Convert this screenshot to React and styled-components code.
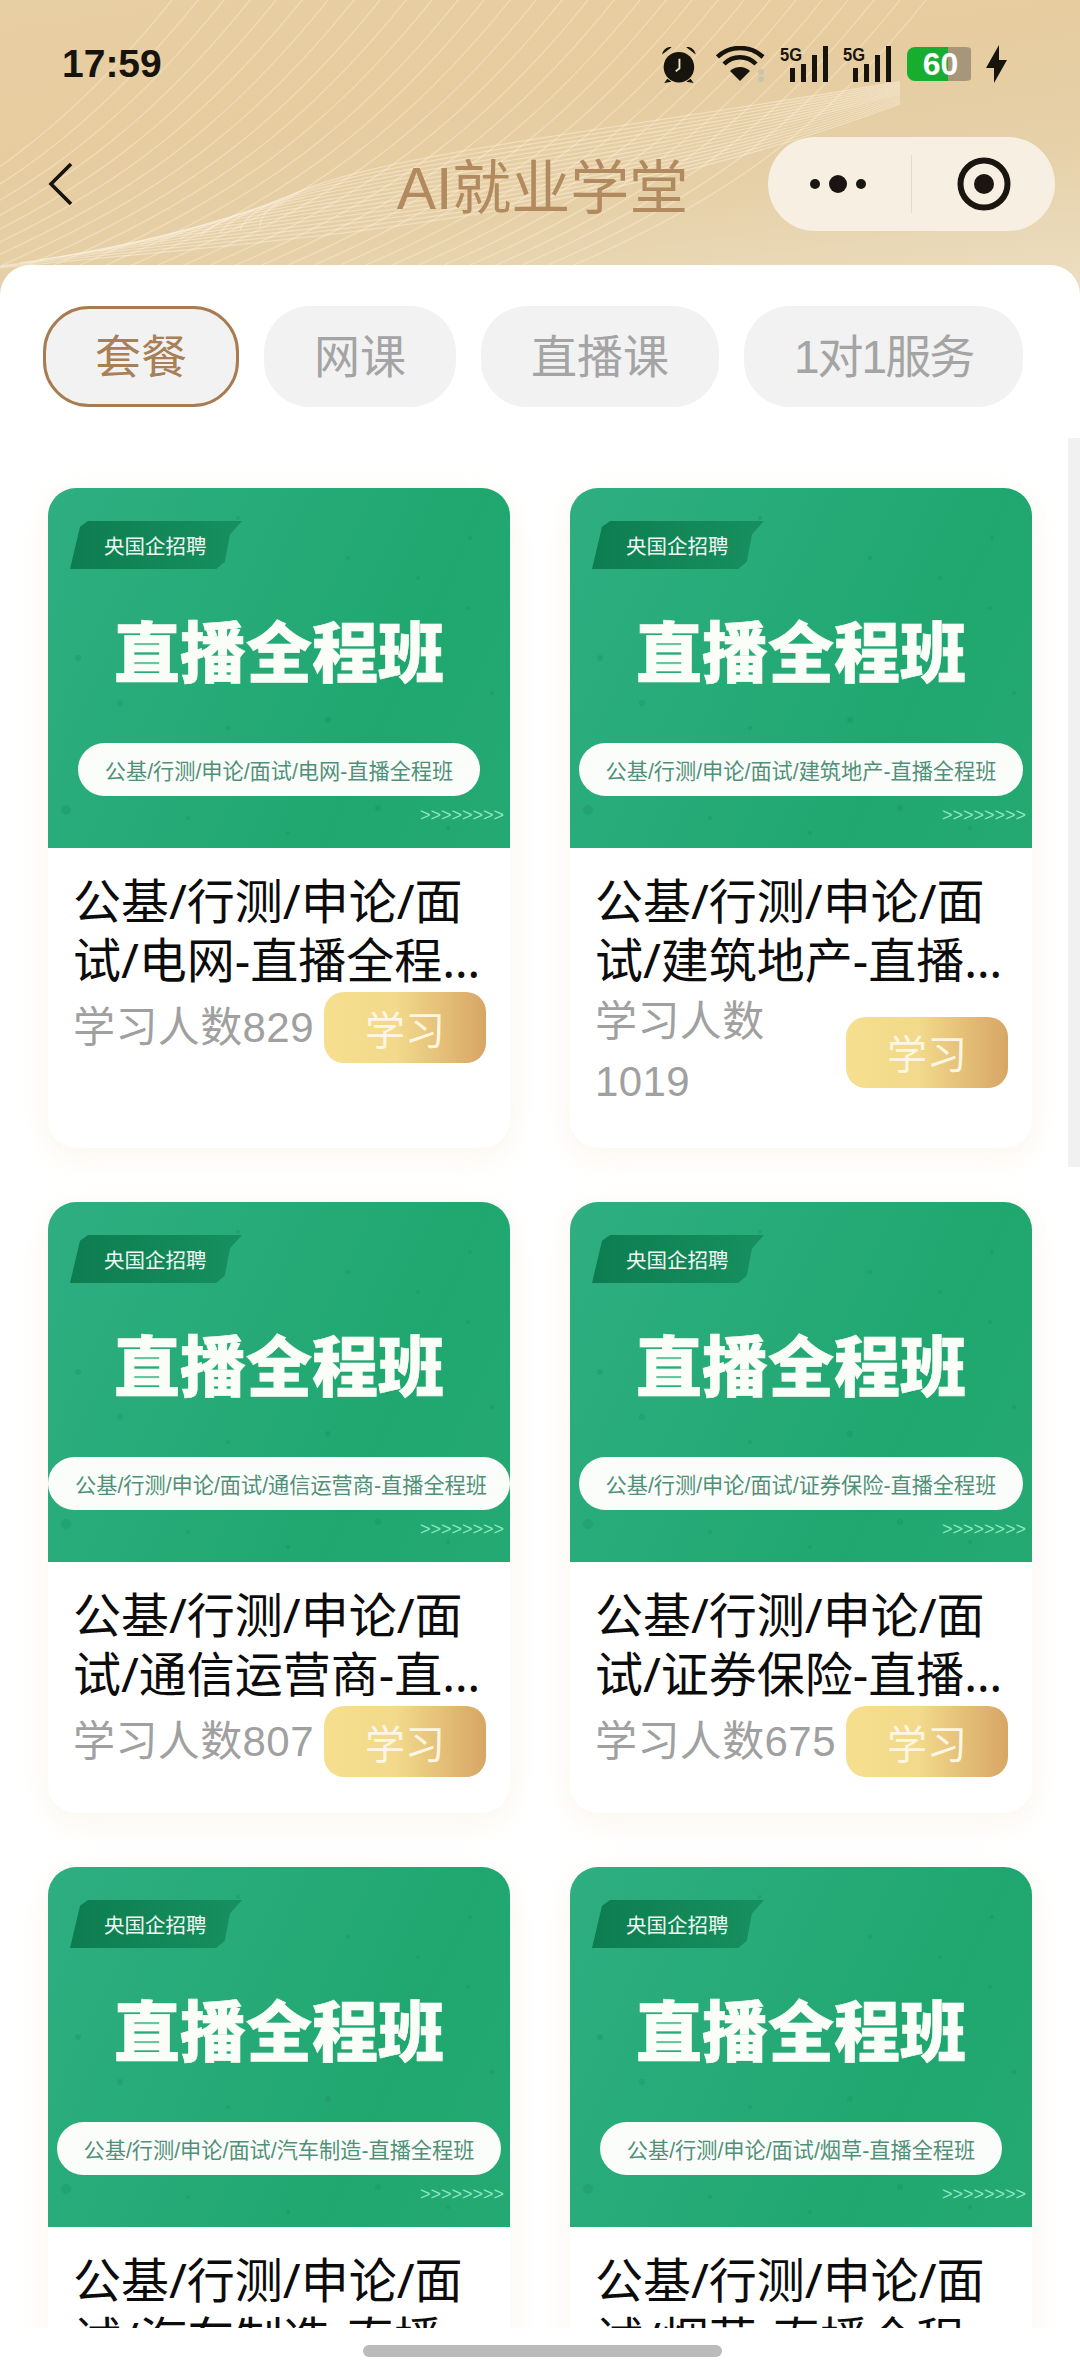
import React from "react";
import styled, { createGlobalStyle } from "styled-components";

const courses = [
  { major: "电网", students: 829 },
  { major: "建筑地产", students: 1019 },
  { major: "通信运营商", students: 807 },
  { major: "证券保险", students: 675 },
  { major: "汽车制造", students: 0 },
  { major: "烟草", students: 0 },
];

const tabs = ["套餐", "网课", "直播课", "1对1服务"];

// fixed spots so the paper texture on the banners is the same every run
const specks = [
  [64, 60, 3], [190, 30, 2], [300, 70, 2], [422, 50, 2], [30, 170, 3], [72, 215, 3],
  [180, 240, 2], [280, 232, 3], [340, 190, 2], [420, 120, 2], [444, 205, 2], [18, 322, 5],
  [140, 330, 2], [240, 345, 2], [330, 320, 3], [400, 340, 2], [110, 285, 2], [370, 90, 2],
];

const GlobalStyle = createGlobalStyle`
  html, body {
    margin: 0;
    padding: 0;
    background: #fff;
  }
  * {
    box-sizing: border-box;
  }
`;

const Page = styled.div`
  position: relative;
  width: 1080px;
  height: 2376px;
  overflow: hidden;
  display: flex;
  flex-direction: column;
  font-family: "Liberation Sans", "Noto Sans CJK SC", sans-serif;
  background: #fff;
`;

const Header = styled.header`
  position: relative;
  height: 295px;
  margin-bottom: -30px;
  flex-shrink: 0;
  background: linear-gradient(172deg, #e8cfa3 0%, #e6cc9f 35%, #e6d0a8 65%, #ecdfc3 100%);
`;

const Waves = styled.svg`
  position: absolute;
  inset: 0;
`;

const StatusBar = styled.div`
  position: relative;
  height: 128px;
  padding: 0 73px 0 62px;
  display: flex;
  align-items: center;
  justify-content: space-between;
`;

const Clock = styled.div`
  font-size: 39px;
  font-weight: 700;
  color: #17130d;
`;

const StatusIcons = styled.div`
  display: flex;
  align-items: center;
  gap: 15px;
`;

const Battery = styled.div`
  position: relative;
  width: 67px;
  height: 34px;
  margin-left: 1px;
  margin-right: -3px;
  display: flex;
  align-items: center;
  justify-content: center;
  font-size: 32px;
  font-weight: 700;
  color: #fff;
  border-radius: 8px;
  background: linear-gradient(90deg, #17ad2f 0 61%, #a8967c 61% 96%, transparent 96%);
`;

const NavBar = styled.div`
  position: relative;
  height: 112px;
  display: grid;
  grid-template-columns: 1fr auto 1fr;
  align-items: center;
  padding: 0 25px 0 48px;
`;

const Title = styled.h1`
  margin: 0;
  font-size: 59px;
  font-weight: 400;
  color: #b28a5f;
  transform: translate(-9px, -1px);
`;

const Capsule = styled.div`
  justify-self: end;
  width: 287px;
  height: 94px;
  display: flex;
  align-items: center;
  border-radius: 47px;
  background: #f6efe2;
`;

const CapsulePart = styled.div`
  flex: 1;
  height: 58px;
  display: flex;
  align-items: center;
  justify-content: center;
  & + & {
    border-left: 1px solid #e3dccd;
  }
`;

const Panel = styled.main`
  position: relative;
  flex: 1;
  min-height: 0;
  display: flex;
  flex-direction: column;
  border-radius: 30px 30px 0 0;
  background: #fff;
`;

const TabRow = styled.nav`
  display: flex;
  gap: 25px;
  padding: 41px 0 0 43px;
  margin-bottom: 41px;
`;

const Tab = styled.div`
  height: 101px;
  padding: 0 ${(p) => (p.$active ? "49px" : "50px")};
  display: flex;
  align-items: center;
  font-size: 46px;
  line-height: 1;
  letter-spacing: ${(p) => (p.$tight ? "-2px" : "0")};
  border-radius: 46px;
  background: #f2f2f2;
  color: ${(p) => (p.$active ? "#a97f56" : "#a4a4a4")};
  border: ${(p) => (p.$active ? "3px solid #a97b50" : "none")};
`;

const CourseArea = styled.div`
  height: 1880px;
  overflow: hidden;
`;

const Grid = styled.div`
  display: grid;
  grid-template-columns: 462px 462px;
  column-gap: 60px;
  row-gap: 54px;
  padding: 40px 48px 0;
`;

const Card = styled.article`
  border-radius: 28px;
  background: #fff;
  box-shadow: 0 8px 30px rgba(238, 205, 160, 0.2);
`;

const Banner = styled.div`
  position: relative;
  height: 360px;
  overflow: hidden;
  display: flex;
  flex-direction: column;
  border-radius: 28px 28px 0 0;
  background: linear-gradient(115deg, #2eae82 0%, #25aa76 45%, #20a76f 70%, #24a972 100%);
`;

const Specks = styled.svg`
  position: absolute;
  inset: 0;
`;

const Badge = styled.div`
  position: relative;
  width: 172px;
  height: 48px;
  margin: 33px 0 0 22px;
  padding-left: 34px;
  display: flex;
  align-items: center;
  font-size: 20.5px;
  color: #eef8f2;
  white-space: nowrap;
  background: linear-gradient(90deg, #0d7d50, #17905f);
  clip-path: polygon(0 100%, 10px 12%, 18px 0, 100% 0, 93% 28%, 90% 85%, 85% 100%);
`;

const BannerTitle = styled.div`
  position: relative;
  margin-top: 41px;
  height: 88px;
  text-align: center;
  font-size: 66px;
  line-height: 88px;
  font-weight: 900;
  color: #fbfdf9;
  white-space: nowrap;
  -webkit-text-stroke: 0.6px #fbfdf9;
`;

const BannerPill = styled.div`
  position: relative;
  align-self: center;
  max-width: 100%;
  height: 53px;
  margin-top: 45px;
  padding: 0 27px;
  display: flex;
  align-items: center;
  font-size: 21.2px;
  color: #4f9078;
  white-space: nowrap;
  border-radius: 27px;
  background: #fbfdfb;
`;

const Arrows = styled.div`
  position: relative;
  align-self: flex-end;
  margin: 9px 6px 0 0;
  font-size: 18px;
  line-height: 20px;
  color: #8be8c2;
  white-space: nowrap;
`;

const CardBody = styled.div`
  padding: 23px 24px 36px 25px;
`;

const CardTitle = styled.h2`
  margin: 0;
  height: 121px;
  font-family: "Noto Sans", "Noto Sans CJK SC", sans-serif;
  font-size: 48px;
  line-height: 59px;
  font-weight: 400;
  color: #0c0c0c;
  display: -webkit-box;
  -webkit-box-orient: vertical;
  -webkit-line-clamp: 2;
  overflow: hidden;
`;

const MetaRow = styled.div`
  display: flex;
  align-items: center;
  justify-content: space-between;
`;

const Students = styled.div`
  flex: 1;
  min-width: 0;
  font-size: 42px;
  line-height: 60px;
  letter-spacing: 0.4px;
  color: #a0a0a0;
`;

const StudyButton = styled.button`
  flex-shrink: 0;
  width: 162px;
  height: 71px;
  padding: 0;
  border: none;
  border-radius: 20px;
  font-family: inherit;
  font-size: 40px;
  color: #fdf6e2;
  background: linear-gradient(90deg, #f6df8e 0%, #f2d98b 45%, #d7a665 100%);
`;

const Scrollbar = styled.div`
  position: absolute;
  top: 173px;
  right: 0;
  width: 12px;
  height: 729px;
  background: #f1f1f1;
`;

const HomeBar = styled.div`
  position: absolute;
  left: 363px;
  bottom: 19px;
  width: 359px;
  height: 12px;
  border-radius: 6px;
  background: #bbbbbb;
`;

const WaveLines = () => {
  const sweep = [];
  for (let i = 0; i < 30; i++) {
    // steep lines in the upper left that lean over as they rise
    const x = -120 + i * 26;
    sweep.push(
      <path
        key={`s${i}`}
        d={`M${x - 60} 265 C ${x + 90} 200, ${x + 190} 130, ${x + 300} -10`}
        fill="none"
        stroke="#fff4de"
        strokeOpacity="0.38"
        strokeWidth="1.3"
      />
    );
  }
  const fan = [];
  for (let i = 0; i < 16; i++) {
    // the bundle that narrows toward the right of the title
    fan.push(
      <path
        key={`f${i}`}
        d={`M${i * 20 - 40} ${272 - i * 3} C 260 ${240 - i * 5}, 560 ${230 - i * 6}, 900 ${104 - i * 1.5}`}
        fill="none"
        stroke="#fff8ea"
        strokeOpacity="0.42"
        strokeWidth="1.3"
      />
    );
  }
  return (
    <Waves width="1080" height="295" viewBox="0 0 1080 295">
      {sweep}
      {fan}
    </Waves>
  );
};

const AlarmIcon = () => (
  <svg width="41" height="38" viewBox="0 0 39 36">
    <circle cx="18" cy="21" r="14.5" fill="#17130d" />
    <path d="M2 9 C 3 4 7 1.5 11 2 Z M34 9 C 33 4 29 1.5 25 2 Z" fill="#17130d" />
    <path d="M7 32 L4 36 L11 35 Z M29 32 L32 36 L25 35 Z" fill="#17130d" />
    <path d="M18.5 13 V22 L15 25" fill="none" stroke="#f1e3c6" strokeWidth="1.8" />
  </svg>
);

const WifiIcon = () => (
  <svg width="49" height="36" viewBox="0 0 49 36">
    <path d="M1.5 11 C 14 -1 34 -1 47 11" fill="none" stroke="#17130d" strokeWidth="4.5" />
    <path d="M8 18 C 17 9 31 9 40 18" fill="none" stroke="#17130d" strokeWidth="4.5" />
    <path d="M14 25 C 20 19.5 28 19.5 34 25 L24 35 Z" fill="#17130d" />
    <circle cx="45" cy="26" r="3" fill="#c9c4ae" />
    <circle cx="45" cy="33" r="3" fill="#c9c4ae" />
  </svg>
);

const SignalIcon = () => (
  <svg width="48" height="38" viewBox="0 0 48 38">
    <text x="0" y="16" fontFamily="Liberation Sans, sans-serif" fontWeight="700" fontSize="18" textLength="22" lengthAdjust="spacingAndGlyphs" fill="#17130d">5G</text>
    <rect x="10" y="23" width="5" height="14" fill="#17130d" />
    <rect x="21" y="19" width="5" height="18" fill="#17130d" />
    <rect x="32" y="10" width="5" height="27" fill="#17130d" />
    <rect x="43" y="1" width="5" height="36" fill="#17130d" />
  </svg>
);

const BoltIcon = () => (
  <svg width="21" height="38" viewBox="0 0 21 38">
    <path d="M13 0 L0 23 H8 L8 38 L21 15 H13 Z" fill="#17130d" />
  </svg>
);

const BackIcon = () => (
  <svg width="26" height="44" viewBox="0 0 26 44">
    <path d="M23 2 L3 22 L23 42" fill="none" stroke="#17130d" strokeWidth="3.6" />
  </svg>
);

const MoreIcon = () => (
  <svg width="66" height="20" viewBox="0 0 66 20">
    <circle cx="8" cy="10" r="5" fill="#1a1510" />
    <circle cx="31" cy="10" r="9" fill="#1a1510" />
    <circle cx="54" cy="10" r="5" fill="#1a1510" />
  </svg>
);

const TargetIcon = () => (
  <svg width="54" height="54" viewBox="0 0 54 54">
    <circle cx="27" cy="27" r="23.5" fill="none" stroke="#1a1510" strokeWidth="6" />
    <circle cx="27" cy="27" r="10" fill="#1a1510" />
  </svg>
);

const CourseCard = ({ major, students }) => {
  const name = `公基/行测/申论/面试/${major}-直播全程班`;
  return (
    <Card>
      <Banner>
        <Specks width="462" height="360" viewBox="0 0 462 360">
          {specks.map(([x, y, r]) => (
            <circle key={`${x}-${y}`} cx={x} cy={y} r={r} fill="#137f55" fillOpacity="0.22" />
          ))}
        </Specks>
        <Badge>央国企招聘</Badge>
        <BannerTitle>直播全程班</BannerTitle>
        <BannerPill>{name}</BannerPill>
        <Arrows>{">>>>>>>>"}</Arrows>
      </Banner>
      <CardBody>
        <CardTitle>{name}</CardTitle>
        <MetaRow>
          <Students>学习人数{students}</Students>
          <StudyButton>学习</StudyButton>
        </MetaRow>
      </CardBody>
    </Card>
  );
};

const App = () => {
  return (
    <Page>
      <GlobalStyle />
      <Header>
        <WaveLines />
        <StatusBar>
          <Clock>17:59</Clock>
          <StatusIcons>
            <AlarmIcon />
            <WifiIcon />
            <SignalIcon />
            <SignalIcon />
            <Battery>60</Battery>
            <BoltIcon />
          </StatusIcons>
        </StatusBar>
        <NavBar>
          <BackIcon />
          <Title>AI就业学堂</Title>
          <Capsule>
            <CapsulePart>
              <MoreIcon />
            </CapsulePart>
            <CapsulePart>
              <TargetIcon />
            </CapsulePart>
          </Capsule>
        </NavBar>
      </Header>
      <Panel>
        <TabRow>
          {tabs.map((tab, i) => (
            <Tab key={tab} $active={i === 0} $tight={i === 3}>
              {tab}
            </Tab>
          ))}
        </TabRow>
        <CourseArea>
          <Grid>
            {courses.map((course) => (
              <CourseCard key={course.major} {...course} />
            ))}
          </Grid>
        </CourseArea>
        <Scrollbar />
      </Panel>
      <HomeBar />
    </Page>
  );
};

export default App;
